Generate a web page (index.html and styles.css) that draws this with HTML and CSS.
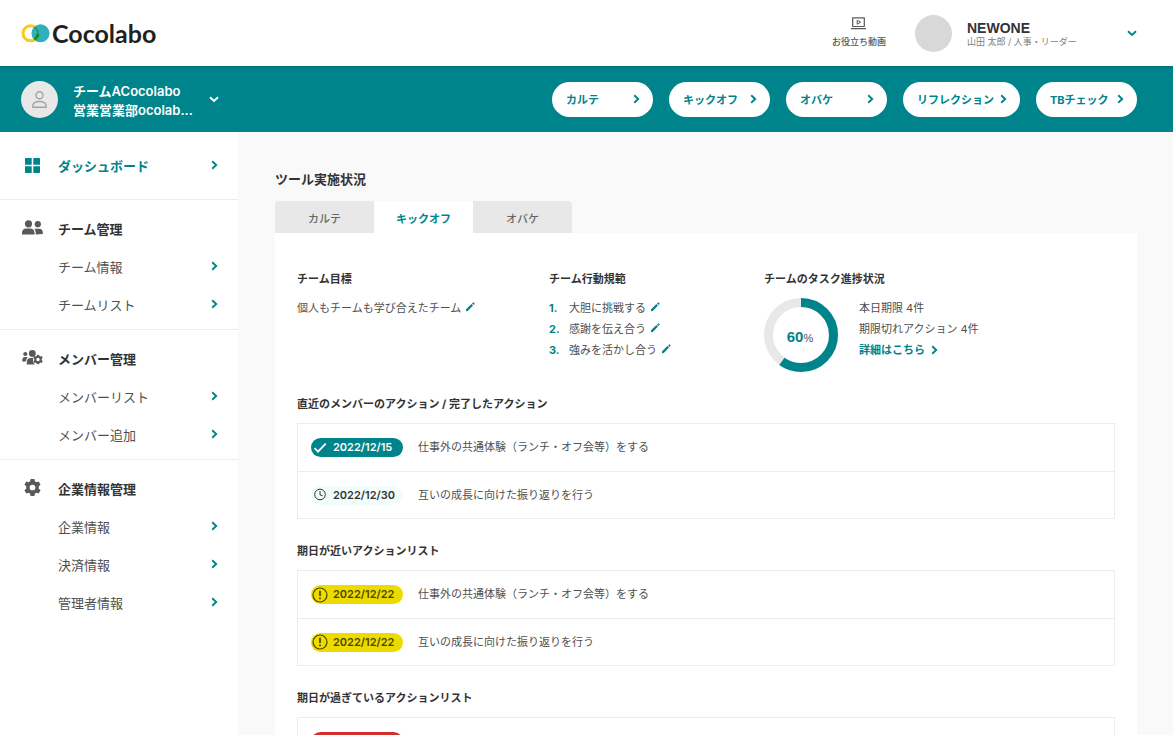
FILE: index.html
```html
<!DOCTYPE html>
<html lang="ja">
<head>
<meta charset="utf-8">
<meta name="viewport" content="width=device-width, initial-scale=1">
<title>Cocolabo</title>
<link rel="stylesheet" href="styles.css">
</head>
<body>
<svg class="sprite" aria-hidden="true">
  <symbol id="chev" viewBox="0 0 7 10"><path d="M1.2 1.2 5.2 5 1.2 8.8" fill="none" stroke="currentColor" stroke-width="1.9"/></symbol>
  <symbol id="down" viewBox="0 0 10 7"><path d="M1 1.2 5 5 9 1.2" fill="none" stroke="currentColor" stroke-width="1.9"/></symbol>
  <symbol id="pencil" viewBox="0 0 10 10"><path d="M1 9.300 1.100 7.300 6.400 2 8 3.600 2.800 8.900ZM7 1.400 8 .6Q8.500.2 8.900.6L9.400 1.100Q9.800 1.600 9.400 2.100L8.600 3Z" fill="currentColor"/></symbol>
  <symbol id="alert" viewBox="0 0 16 16"><circle cx="8" cy="8" r="7" fill="none" stroke="currentColor" stroke-width="1.2"/><path d="M8 3.800v5.200M8 10.500v1.700" stroke="currentColor" stroke-width="1.700"/></symbol>
  <symbol id="gear" viewBox="0 0 16 16"><path fill="currentColor" fill-rule="evenodd" d="M6.200 0h3.600l.4 2.200 1.500.9 2.100-.8 1.800 3.100-1.700 1.400v2.400l1.700 1.400-1.800 3.100-2.100-.8-1.500.9-.4 2.200H6.200l-.4-2.200-1.500-.9-2.100.8L.4 10.600l1.700-1.400V6.800L.4 5.400l1.800-3.100 2.100.8 1.500-.9ZM8 5.300a2.700 2.700 0 1 0 0 5.400 2.700 2.700 0 0 0 0-5.400Z"/></symbol>
</svg>

<header class="header">
  <a class="logo" href="#">
    <svg width="29" height="19" viewBox="0 0 29 19" aria-hidden="true">
      <circle cx="19.500" cy="9.300" r="9" fill="#2fb1bd"/>
      <circle cx="9.500" cy="9.300" r="7.500" fill="none" stroke="#f5cb1d" stroke-width="3"/>
      <path d="M18.500 9.300A9 9 0 0 1 14.200 16.800L12.600 14.400A6 6 0 0 0 15.500 9.300Z" fill="#168a2c"/>
      <path d="M14.200 2.100A9 9 0 0 1 18.500 9.300H15.500A6 6 0 0 0 12.400 4Z" fill="#159aa3"/>
    </svg>
    <span>Cocolabo</span>
  </a>
  <a class="video" href="#">
    <svg width="15" height="13" viewBox="0 0 15 13" aria-hidden="true"><path d="M1.700.9h11.600v8.600H1.700ZM0 11.700h15" fill="none" stroke="#595959" stroke-width="1.200"/><path d="M6.200 3.200 9.600 5.200 6.200 7.200Z" fill="none" stroke="#595959"/></svg>
    <span>お役立ち動画</span>
  </a>
  <button class="user" type="button">
    <span class="user-pic"></span>
    <span class="user-text"><strong>NEWONE</strong><span>山田 太郎 / 人事・リーダー</span></span>
    <svg width="10" height="7"><use href="#down"/></svg>
  </button>
</header>

<div class="teambar">
  <button class="team" type="button">
    <span class="team-pic"><svg width="15" height="17" viewBox="0 0 15 17" fill="none" stroke="#a3a3a3" stroke-width="1.400" aria-hidden="true"><circle cx="7.500" cy="4.200" r="3.500"/><path d="M.9 16.200v-1.700Q1.500 10.500 7.500 10.500T14.100 14.500V16.200Z"/></svg></span>
    <span class="team-name">チームACocolabo<br>営業営業部ocolab...</span>
    <svg width="10" height="7"><use href="#down"/></svg>
  </button>
  <nav class="tools" aria-label="ツール">
    <a href="#">カルテ<svg class="arrow" width="7" height="10"><use href="#chev"/></svg></a>
    <a href="#">キックオフ<svg class="arrow" width="7" height="10"><use href="#chev"/></svg></a>
    <a href="#">オバケ<svg class="arrow" width="7" height="10"><use href="#chev"/></svg></a>
    <a href="#">リフレクション<svg class="arrow" width="7" height="10"><use href="#chev"/></svg></a>
    <a href="#">TBチェック<svg class="arrow" width="7" height="10"><use href="#chev"/></svg></a>
  </nav>
</div>

<div class="layout">
  <nav class="sidebar" aria-label="メニュー">
    <a class="dash" href="#">
      <svg width="15" height="15" viewBox="0 0 15 15" aria-hidden="true"><path fill="currentColor" d="M.5 0H6.700V6.700H0V.5ZM8.300 0H14.500L15 .5V6.700H8.300ZM0 8.300H6.700V15H.5L0 14.500ZM8.300 8.300H15V14.500L14.500 15H8.300Z"/></svg>
      <span>ダッシュボード</span><svg class="arrow" width="7" height="10"><use href="#chev"/></svg>
    </a>
    <section class="group">
      <h2><svg width="21" height="15" viewBox="0 0 21 15" fill="#595959" aria-hidden="true"><circle cx="6.500" cy="3.800" r="3.600"/><circle cx="15.800" cy="4.200" r="3.100"/><path d="M0 14.500V12.500Q.6 8.500 4 8.500H8.500Q11.900 8.500 12.500 12.500V14.500ZM13.700 14.500V12.300Q13.500 10.200 12.400 8.700H17.500Q20.500 9 20.800 12V14Z"/></svg>チーム管理</h2>
      <a href="#">チーム情報<svg class="arrow" width="7" height="10"><use href="#chev"/></svg></a>
      <a href="#">チームリスト<svg class="arrow" width="7" height="10"><use href="#chev"/></svg></a>
    </section>
    <section class="group">
      <h2><svg width="21" height="15" viewBox="0 0 21 15" fill="#595959" color="#595959" aria-hidden="true"><circle cx="3.300" cy="4" r="2.100"/><circle cx="10.300" cy="3.500" r="3.400"/><path d="M.3 11.500V9.500Q.4 7 2.500 7H5.800Q4.200 8.500 3.800 11.500ZM4.800 14.500V12Q5 8 8.500 8H11.400Q10 11.500 12.800 14.500Z"/><svg x="11" y="4.500" width="10" height="10"><use href="#gear"/></svg></svg>メンバー管理</h2>
      <a href="#">メンバーリスト<svg class="arrow" width="7" height="10"><use href="#chev"/></svg></a>
      <a href="#">メンバー追加<svg class="arrow" width="7" height="10"><use href="#chev"/></svg></a>
    </section>
    <section class="group">
      <h2><svg class="cog" width="21" height="17"><use href="#gear"/></svg>企業情報管理</h2>
      <a href="#">企業情報<svg class="arrow" width="7" height="10"><use href="#chev"/></svg></a>
      <a href="#">決済情報<svg class="arrow" width="7" height="10"><use href="#chev"/></svg></a>
      <a href="#">管理者情報<svg class="arrow" width="7" height="10"><use href="#chev"/></svg></a>
    </section>
  </nav>

  <main class="main">
    <h1>ツール実施状況</h1>
    <div class="tabs" role="tablist">
      <button type="button" role="tab" aria-selected="false">カルテ</button>
      <button type="button" role="tab" aria-selected="true">キックオフ</button>
      <button type="button" role="tab" aria-selected="false">オバケ</button>
    </div>
    <div class="panel" role="tabpanel">
      <div class="summary">
        <section>
          <h3>チーム目標</h3>
          <p>個人もチームも学び合えたチーム<button class="edit" type="button" aria-label="編集"><svg width="10" height="10"><use href="#pencil"/></svg></button></p>
        </section>
        <section>
          <h3>チーム行動規範</h3>
          <ol class="rules">
            <li><b>1.</b>大胆に挑戦する<button class="edit" type="button" aria-label="編集"><svg width="10" height="10"><use href="#pencil"/></svg></button></li>
            <li><b>2.</b>感謝を伝え合う<button class="edit" type="button" aria-label="編集"><svg width="10" height="10"><use href="#pencil"/></svg></button></li>
            <li><b>3.</b>強みを活かし合う<button class="edit" type="button" aria-label="編集"><svg width="10" height="10"><use href="#pencil"/></svg></button></li>
          </ol>
        </section>
        <section>
          <h3>チームのタスク進捗状況</h3>
          <div class="progress">
            <div class="donut">
              <svg width="74" height="74" viewBox="0 0 74 74" fill="none" stroke-width="9" aria-hidden="true"><circle cx="37" cy="37" r="32.500" stroke="#e8e8e8"/><circle cx="37" cy="37" r="32.500" stroke="#00848b" pathLength="100" stroke-dasharray="60 40" transform="rotate(-90 37 37)"/></svg>
              <span><b>60</b>%</span>
            </div>
            <div>
              <p>本日期限 4件</p>
              <p>期限切れアクション 4件</p>
              <a class="more" href="#">詳細はこちら<svg class="arrow" width="7" height="10"><use href="#chev"/></svg></a>
            </div>
          </div>
        </section>
      </div>

      <h3>直近のメンバーのアクション / 完了したアクション</h3>
      <ul class="actions">
        <li><span class="badge done"><svg width="18" height="16" viewBox="0 0 18 16"><path d="M3.500 8.200 7 11.700 14.700 3.700" fill="none" stroke="currentColor" stroke-width="1.900"/></svg>2022/12/15</span>仕事外の共通体験（ランチ・オフ会等）をする</li>
        <li><span class="badge wait"><svg width="18" height="16" viewBox="0 0 18 16" fill="none" stroke="currentColor" stroke-width="1"><circle cx="9" cy="7.500" r="5.300"/><path d="M9 4v3.800l2.700 1"/></svg>2022/12/30</span>互いの成長に向けた振り返りを行う</li>
      </ul>

      <h3>期日が近いアクションリスト</h3>
      <ul class="actions">
        <li><span class="badge near"><svg width="18" height="16"><use href="#alert"/></svg>2022/12/22</span>仕事外の共通体験（ランチ・オフ会等）をする</li>
        <li><span class="badge near"><svg width="18" height="16"><use href="#alert"/></svg>2022/12/22</span>互いの成長に向けた振り返りを行う</li>
      </ul>

      <h3>期日が過ぎているアクションリスト</h3>
      <ul class="actions">
        <li><span class="badge late"></span></li>
      </ul>
    </div>
  </main>
</div>
</body>
</html>
```

FILE: styles.css
```css
* { box-sizing: border-box; }

:root {
  --teal: #00848b;
  --ink: #333;
  --text: #4f4f4f;
  --line: #ececec;
}

body {
  margin: 0;
  height: 100vh;
  display: flex;
  flex-direction: column;
  overflow: hidden;
  background: #f9f9f9;
  color: var(--text);
  font: 11px/21px Inter, "Noto Sans CJK JP", sans-serif;
}

a { color: inherit; text-decoration: none; }
button { border: 0; padding: 0; background: none; color: inherit; font: inherit; text-align: left; cursor: pointer; }
h1, h2, h3, p, ul, ol { margin: 0; padding: 0; }
ul, ol { list-style: none; }
svg { flex: none; }
.sprite { position: absolute; width: 0; height: 0; }
.arrow { margin-left: auto; margin-bottom: 2px; color: var(--teal); }

.header {
  flex: none;
  display: flex;
  align-items: center;
  height: 66px;
  padding: 0 36px 0 21px;
  background: #fff;
}
.logo {
  display: flex;
  align-items: center;
  gap: 2px;
  margin-right: auto;
  color: #231f20;
  font: 700 25px/28px Lato, sans-serif;
}
.video {
  display: flex;
  flex-direction: column;
  align-items: center;
  gap: 5px;
  margin-right: 29px;
  color: #555;
  font-size: 9px;
  font-weight: 500;
  line-height: 14px;
}
.user { display: flex; align-items: center; width: 222px; }
.user-pic { width: 37px; height: 37px; margin-right: 15px; border-radius: 50%; background: #d8d8d8; }
.user-text { display: flex; flex-direction: column; margin-right: auto; padding-top: 2px; color: #808080; font-size: 9px; line-height: 13px; white-space: nowrap; }
.user-text strong { color: var(--ink); font: 700 14px/14px "Liberation Sans", sans-serif; }
.user svg { color: var(--teal); }

.teambar {
  flex: none;
  display: flex;
  align-items: center;
  justify-content: space-between;
  height: 66px;
  padding: 0 36px 0 21px;
  background: var(--teal);
  box-shadow: inset 0 4px 4px -3px #00000030;
}
.team { display: flex; align-items: center; width: 198px; color: #fff; }
.team-pic { display: grid; place-items: center; width: 37px; height: 37px; margin-right: 15px; border-radius: 50%; background: #e8e8e8; }
.team-name { margin-right: auto; padding-top: 4px; font-size: 13px; font-weight: 600; line-height: 19px; white-space: nowrap; }

.tools { display: flex; gap: 16px; }
.tools a {
  display: flex;
  align-items: center;
  gap: 6px;
  min-width: 101px;
  height: 35px;
  padding: 2px 13px 0 14px;
  border-radius: 18px;
  background: #fff;
  color: var(--teal);
  font-weight: 700;
  white-space: nowrap;
}

.layout { flex: 1; display: flex; min-height: 0; }
.sidebar { flex: none; width: 238px; background: #fff; font-size: 13px; }
.dash { display: flex; align-items: center; height: 67px; padding: 0 20px 0 25px; color: var(--teal); font-weight: 700; }
.dash span { margin-left: 18px; padding-top: 1px; }
.group { padding: 10px 20px 5px 22px; border-top: 1px solid var(--line); }
.group h2 { display: flex; align-items: center; gap: 15px; height: 38px; color: var(--ink); font-size: 13px; }
.group h2 > svg { margin-bottom: 3px; }
.group a { display: flex; align-items: center; height: 38px; padding-left: 36px; }
.cog { color: #595959; }

.main { flex: 1; min-width: 0; padding: 37px 36px 0 37px; }
.main h1 { color: var(--ink); font-size: 13px; line-height: 21px; }
.tabs { display: flex; margin-top: 11px; }
.tabs button {
  width: 99px;
  height: 32px;
  padding-top: 5px;
  background: #e8e8e8;
  color: #666;
  font-weight: 500;
  text-align: center;
}
.tabs button:first-child { border-radius: 4px 0 0; }
.tabs button:last-child { border-radius: 0 4px 0 0; }
.tabs [aria-selected="true"] { background: #fff; color: var(--teal); font-weight: 700; }

.panel { padding: 36px 22px 24px; background: #fff; }
.panel h3 { color: var(--ink); font-size: 11px; line-height: 21px; }
.summary { display: grid; grid-template-columns: 252px 215px 1fr; height: 125px; }
.summary h3 { margin-bottom: 8px; }
.edit { margin: 0 0 4px 4px; color: var(--teal); }
.edit svg { display: block; }
.summary p, .rules li { display: flex; align-items: center; white-space: pre; }
.rules b { width: 20px; color: var(--teal); }
.progress { display: flex; gap: 21px; }
.donut { position: relative; width: 74px; height: 74px; }
.donut span { position: absolute; inset: 2px 2px 0 0; display: flex; align-items: baseline; justify-content: center; font-family: "Liberation Sans", sans-serif; line-height: 74px; }
.donut b { color: var(--teal); font-size: 15px; }
.more { display: inline-flex; align-items: center; gap: 6px; color: var(--teal); font-weight: 700; }

.actions { margin: 8px 0 22px; border: 1px solid var(--line); }
.actions li { display: flex; align-items: center; gap: 15px; height: 47px; padding-left: 13px; }
.actions li + li { border-top: 1px solid var(--line); }
.badge {
  display: flex;
  align-items: center;
  gap: 4px;
  width: 92px;
  height: 19px;
  border-radius: 10px;
  font-weight: 600;
  line-height: 19px;
}
.done { background: var(--teal); color: #fff; }
.wait { background: #f2fcfb; color: var(--ink); }
.near { background: #eddb00; color: #4a4500; }
.late { background: #d32f2f; }
```
